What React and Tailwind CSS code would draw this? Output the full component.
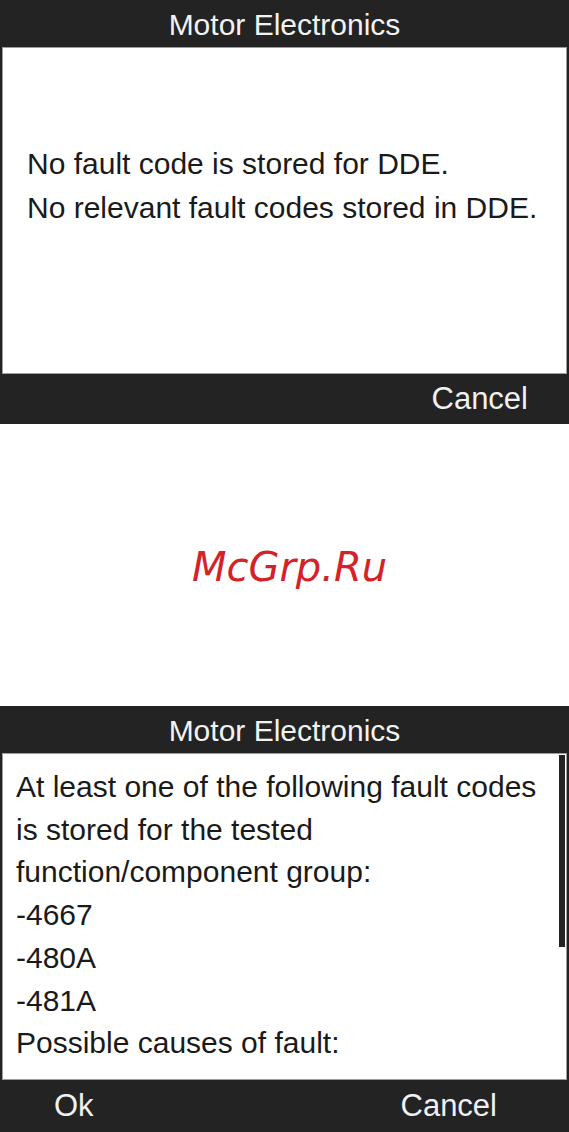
import React from 'react';

const sans = { fontFamily: '"Liberation Sans", Arial, sans-serif' };

function Screen({ children, footer, footerClass }) {
  return (
    <div className="flex flex-col bg-[#232323] px-[2px]">
      <div className="flex h-[47px] items-center justify-center pt-[1px] text-[30px] text-[#f2f2f2]">
        Motor Electronics
      </div>
      <div className="h-[327px] border border-[#9c9c9c] bg-white">{children}</div>
      <div className={footerClass}>{footer}</div>
    </div>
  );
}

export default function App() {
  const codes = [
    'At least one of the following fault codes',
    'is stored for the tested',
    'function/component group:',
    '-4667',
    '-480A',
    '-481A',
    'Possible causes of fault:',
  ];

  return (
    <div className="w-[569px] bg-white" style={sans}>
      <Screen
        footerClass="flex h-[50px] items-center justify-end pr-[39px] text-[31px] text-[#f0f0f0]"
        footer={<span>Cancel</span>}
      >
        <div className="pl-[24px] pt-[94px] text-[30px] leading-[44px] text-[#1a1a1a]">
          <p>No fault code is stored for DDE.</p>
          <p>No relevant fault codes stored in DDE.</p>
        </div>
      </Screen>

      <div className="flex h-[282px] items-center justify-center pl-[10px] pt-[4px]">
        <span
          className="text-[40px] italic text-[#d42229]"
          style={{ fontFamily: '"DejaVu Sans", sans-serif' }}
        >
          McGrp.Ru
        </span>
      </div>

      <Screen
        footerClass="flex h-[52px] items-center justify-between pl-[52px] pr-[70px] text-[31px] text-[#f0f0f0]"
        footer={
          <>
            <span>Ok</span>
            <span>Cancel</span>
          </>
        }
      >
        <div className="flex h-full">
          <div className="flex-1 pl-[13px] pt-[12px] text-[30px] leading-[42.7px] text-[#1a1a1a]">
            {codes.map((line) => (
              <p key={line}>{line}</p>
            ))}
          </div>
          <div className="mr-[1px] pt-[1px]">
            <div className="h-[192px] w-[6px] bg-[#232323]" />
          </div>
        </div>
      </Screen>
    </div>
  );
}
